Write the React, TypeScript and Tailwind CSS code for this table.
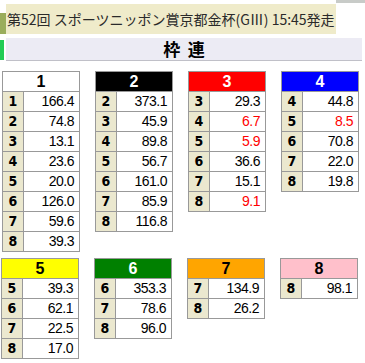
import React from "react";

type Row = [string, string, boolean?];
type T = { n: string; bg: string; fg: string; rows: Row[] };

const tablesTop: T[] = [
  { n: "1", bg: "bg-white", fg: "text-black", rows: [["1","166.4"],["2","74.8"],["3","13.1"],["4","23.6"],["5","20.0"],["6","126.0"],["7","59.6"],["8","39.3"]] },
  { n: "2", bg: "bg-black", fg: "text-white", rows: [["2","373.1"],["3","45.9"],["4","89.8"],["5","56.7"],["6","161.0"],["7","85.9"],["8","116.8"]] },
  { n: "3", bg: "bg-[#ff0000]", fg: "text-white", rows: [["3","29.3"],["4","6.7",true],["5","5.9",true],["6","36.6"],["7","15.1"],["8","9.1",true]] },
  { n: "4", bg: "bg-[#0000ff]", fg: "text-white", rows: [["4","44.8"],["5","8.5",true],["6","70.8"],["7","22.0"],["8","19.8"]] },
];
const tablesBottom: T[] = [
  { n: "5", bg: "bg-[#ffff00]", fg: "text-black", rows: [["5","39.3"],["6","62.1"],["7","22.5"],["8","17.0"]] },
  { n: "6", bg: "bg-[#008000]", fg: "text-white", rows: [["6","353.3"],["7","78.6"],["8","96.0"]] },
  { n: "7", bg: "bg-[#ffa500]", fg: "text-black", rows: [["7","134.9"],["8","26.2"]] },
  { n: "8", bg: "bg-[#ffc0cb]", fg: "text-black", rows: [["8","98.1"]] },
];

function Table({ t }: { t: T }) {
  return (
    <div className="w-[78px] border border-[#999] bg-[#999] flex flex-col gap-px self-start">
      <div className={`h-[19px] flex items-center justify-center font-bold text-[16px] ${t.bg} ${t.fg}`}>{t.n}</div>
      {t.rows.map((r) => (
        <div key={r[0]} className="flex h-[19px] gap-px">
          <div className="w-[20px] bg-[#ebe8cf] flex items-center justify-center font-bold text-[14px] text-black [font-family:'DejaVu_Sans_Condensed','Liberation_Sans',sans-serif]">{r[0]}</div>
          <div className={`flex-1 bg-white flex items-center justify-end pr-[5px] text-[14px] tracking-[-0.5px] ${r[2] ? "text-[#ff0000]" : "text-black"}`}>{r[1]}</div>
        </div>
      ))}
    </div>
  );
}

export default function App() {
  return (
    <div className="w-[365px] h-[363px] bg-white overflow-hidden [font-family:'Liberation_Sans','Noto_Sans_CJK_JP',sans-serif] relative">
      <div className="flex justify-end h-[4px]">
        <div className="w-[29px] h-[3px] bg-[#c8cbc8]" />
      </div>
      <div className="flex items-end h-[30px]">
        <div className="w-[6px] h-[21px] bg-[#9aad5c]" />
        <div className="w-[330px] h-[30px] bg-[#efebca] flex items-center pl-[1px] text-[14px] text-[#2a2a2a] whitespace-nowrap [font-family:'Noto_Sans_CJK_JP',sans-serif]">
          第52回 スポーツニッポン賞京都金杯(GⅢ) 15:45発走
        </div>
      </div>
      <div className="flex items-start h-[23px] mt-[4px]">
        <div className="w-[4px] h-[20px] mt-[2px] bg-[#22cc55]" />
        <div className="w-[2px]" />
        <div className="w-[356px] h-[23px] bg-[#ecebf4] border-b border-[#c0c0c8] flex items-center justify-center text-[17px] font-bold text-black [font-family:'Noto_Sans_CJK_JP',sans-serif]">
          枠&nbsp;&nbsp;連
        </div>
      </div>
      <div className="flex gap-[15px] pl-[2px] mt-[10px]">
        {tablesTop.map((t) => <Table key={t.n} t={t} />)}
      </div>
      <div className="flex gap-[15px] pl-[1px] mt-[6px]">
        {tablesBottom.map((t) => <Table key={t.n} t={t} />)}
      </div>
    </div>
  );
}
